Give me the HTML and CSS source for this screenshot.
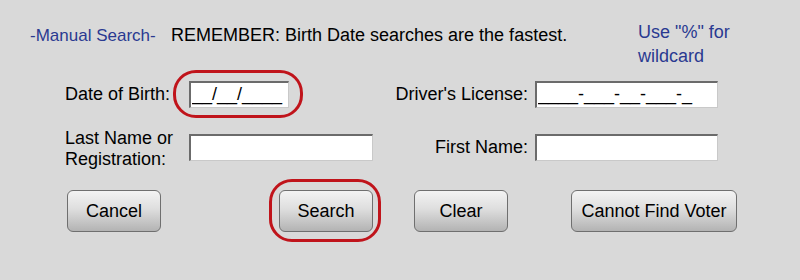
FILE: index.html
```html
<!DOCTYPE html>
<html lang="en">
<head>
    <meta charset="UTF-8">
    <meta name="viewport" content="width=device-width, initial-scale=1.0">
    <title>Manual Search</title>
    <link rel="stylesheet" href="styles.css">
</head>
<body>
    <div class="search-panel">
        <div class="header">
            <div class="section-title">-Manual Search-</div>
            <div class="remember">REMEMBER: Birth Date searches are the fastest.</div>
            <div class="hint">Use "%" for<br>wildcard</div>
        </div>

        <form class="search-form" id="searchForm">
            <label class="field-label" for="dob">Date of Birth:</label>
            <div class="field">
                <span class="highlight highlight-dob">
                    <input type="text" id="dob" class="text-input dob-input" value="__/__/____">
                </span>
            </div>
            <label class="field-label right" for="license">Driver's License:</label>
            <div class="field">
                <input type="text" id="license" class="text-input" value="____-___-__-___-_">
            </div>

            <label class="field-label two-line" for="lastName">Last Name or<br>Registration:</label>
            <div class="field">
                <input type="text" id="lastName" class="text-input">
            </div>
            <label class="field-label right" for="firstName">First Name:</label>
            <div class="field">
                <input type="text" id="firstName" class="text-input">
            </div>
        </form>

        <div class="button-row">
            <button type="button" class="btn">Cancel</button>
            <span class="highlight highlight-search">
                <button type="submit" form="searchForm" class="btn">Search</button>
            </span>
            <button type="button" class="btn">Clear</button>
            <button type="button" class="btn btn-wide">Cannot Find Voter</button>
        </div>
    </div>
</body>
</html>
```

FILE: styles.css
```css
body {
    margin: 0;
    background-color: #d9d9d9;
    font-family: "Liberation Sans", Arial, sans-serif;
    font-size: 18px;
    color: #000;
}

.search-panel {
    width: 800px;
    height: 280px;
}

.header {
    display: grid;
    grid-template-columns: 141px 467px auto;
    align-items: start;
    padding: 20px 0 0 30px;
    height: 50px;
}

.section-title {
    margin-top: 5px;
    font-size: 17px;
    line-height: 21px;
    color: #2a3991;
}

.remember {
    margin-top: 5px;
    line-height: 21px;
}

.hint {
    line-height: 24px;
    color: #2a3991;
}

.search-form {
    display: grid;
    grid-template-columns: 124px 184px 162px 183px;
    grid-template-rows: 48px 46px;
    row-gap: 6px;
    align-items: center;
    padding-left: 65px;
}

.field-label {
    line-height: 21px;
    white-space: nowrap;
}

.field-label.right {
    text-align: right;
    padding-right: 7px;
}

.field-label.two-line {
    padding-top: 4px;
}

.field {
    display: flex;
    align-items: center;
}

.text-input {
    box-sizing: border-box;
    width: 100%;
    height: 27px;
    margin: 0;
    padding: 0 1px;
    font: inherit;
    line-height: 24px;
    color: #000;
    background-color: #fff;
    border-style: solid;
    border-width: 2px 1px 1px 2px;
    border-color: #6b6b6b #c9c9c9 #c9c9c9 #6b6b6b;
    outline: none;
}

.dob-input {
    width: 100px;
}

.button-row {
    display: grid;
    grid-template-columns: 212px 135px 157px auto;
    justify-items: start;
    margin-top: 20px;
    padding-left: 67px;
}

.btn {
    width: 94px;
    height: 42px;
    padding: 0;
    font: inherit;
    color: #000;
    border: 1px solid #6f6f6f;
    border-radius: 6px;
    background: linear-gradient(#f3f3f3, #dedede 45%, #b3b3b3);
    cursor: pointer;
}

.btn-wide {
    width: 166px;
}

/* red annotation ovals drawn over the inputs */
.highlight {
    position: relative;
    display: inline-block;
}

.highlight::after {
    content: "";
    position: absolute;
    border: 3px solid #c0141b;
    border-radius: 23px;
    pointer-events: none;
}

.highlight-dob::after {
    top: -11px;
    right: -14px;
    bottom: -10px;
    left: -16px;
}

.highlight-search {
    display: block;
    height: 42px;
}

.highlight-search::after {
    top: -11px;
    right: -8px;
    bottom: -10px;
    left: -10px;
}
```
